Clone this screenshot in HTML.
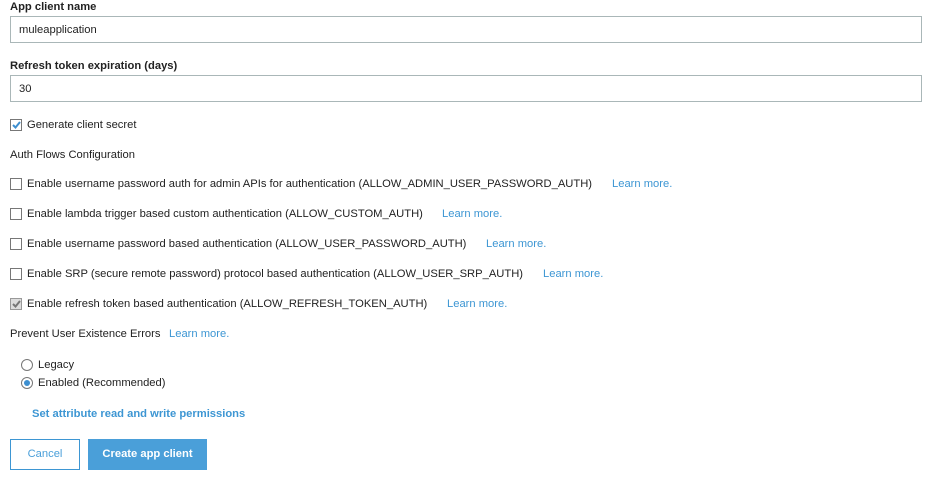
<!DOCTYPE html>
<html><head><style>
body{margin:0;width:935px;height:492px;background:#fff;font-family:"Liberation Sans",Arial,sans-serif;font-size:11.2px;color:#222;position:relative;overflow:hidden}
.a{position:absolute;white-space:nowrap}
.b{font-weight:bold}
.inp{position:absolute;left:10px;width:912px;border:1px solid #aab7b8;box-sizing:border-box;padding-left:8px;line-height:26px;height:27px}
.cb{position:absolute;width:12px;height:12px;border:1px solid #777;box-sizing:border-box;background:#fff;left:10px}
.lk{color:#3d96d3}
.rd{position:absolute;left:21px;width:12px;height:12px;border:1px solid #777;border-radius:50%;box-sizing:border-box;background:#fff}
</style></head><body>
<div class="a b" style="left:10px;top:1px">App client name</div>
<div class="inp" style="top:16px">muleapplication</div>
<div class="a b" style="left:10px;top:60px">Refresh token expiration (days)</div>
<div class="inp" style="top:75px">30</div>
<div class="cb" style="top:119px"><svg width="10" height="10" style="position:absolute;left:0;top:0"><path d="M2 5 L4.5 7.5 L9 2" stroke="#3d8fd0" stroke-width="2" fill="none"/></svg></div>
<div class="a" style="left:27px;top:119px">Generate client secret</div>
<div class="a" style="left:10px;top:149px">Auth Flows Configuration</div>
<div class="cb" style="top:178px"></div><div class="a" style="left:27px;top:178px">Enable username password auth for admin APIs for authentication (ALLOW_ADMIN_USER_PASSWORD_AUTH)</div><div class="a lk" style="left:612px;top:178px">Learn more.</div>
<div class="cb" style="top:208px"></div><div class="a" style="left:27px;top:208px">Enable lambda trigger based custom authentication (ALLOW_CUSTOM_AUTH)</div><div class="a lk" style="left:442px;top:208px">Learn more.</div>
<div class="cb" style="top:238px"></div><div class="a" style="left:27px;top:238px">Enable username password based authentication (ALLOW_USER_PASSWORD_AUTH)</div><div class="a lk" style="left:486px;top:238px">Learn more.</div>
<div class="cb" style="top:268px"></div><div class="a" style="left:27px;top:268px">Enable SRP (secure remote password) protocol based authentication (ALLOW_USER_SRP_AUTH)</div><div class="a lk" style="left:543px;top:268px">Learn more.</div>
<div class="cb" style="top:298px;background:#ddd;border-color:#999"><svg width="10" height="10" style="position:absolute;left:0;top:0"><path d="M2 5 L4.5 7.5 L9 2" stroke="#777" stroke-width="2" fill="none"/></svg></div><div class="a" style="left:27px;top:298px">Enable refresh token based authentication (ALLOW_REFRESH_TOKEN_AUTH)</div><div class="a lk" style="left:447px;top:298px">Learn more.</div>
<div class="a" style="left:10px;top:328px">Prevent User Existence Errors</div><div class="a lk" style="left:169px;top:328px">Learn more.</div>
<div class="rd" style="top:359px"></div><div class="a" style="left:38px;top:359px">Legacy</div>
<div class="rd" style="top:377px"><div style="position:absolute;left:2px;top:2px;width:6px;height:6px;border-radius:50%;background:#3d8fd0"></div></div><div class="a" style="left:38px;top:377px">Enabled (Recommended)</div>
<div class="a b lk" style="left:32px;top:408px">Set attribute read and write permissions</div>
<div class="a lk" style="left:10px;top:439px;width:70px;height:31px;border:1px solid #3d96d3;box-sizing:border-box;text-align:center;line-height:29px;color:#4a9fd9">Cancel</div>
<div class="a b" style="left:88px;top:439px;width:119px;height:31px;background:#4a9fd9;color:#fff;text-align:center;line-height:31px">Create app client</div>
</body></html>
